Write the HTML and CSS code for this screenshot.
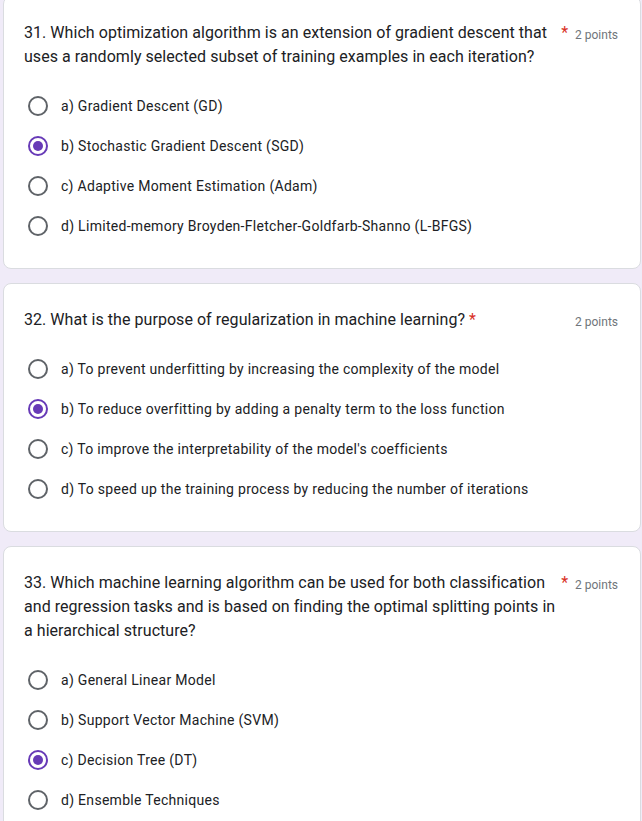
FILE: index.html
```html
<!DOCTYPE html>
<html lang="en">
<head>
<meta charset="utf-8">
<title>Quiz</title>
<link rel="stylesheet" href="styles.css">
</head>
<body>
<main class="form">
  <section class="card card-first">
    <div class="q-head">
      <div class="q-title">31. Which optimization algorithm is an extension of gradient descent that uses a randomly selected subset of training examples in each iteration?</div>
      <span class="req">*</span>
      <span class="pts">2 points</span>
    </div>
    <div class="opts">
      <div class="opt"><span class="radio"></span><span class="lbl">a) Gradient Descent (GD)</span></div>
      <div class="opt"><span class="radio on"></span><span class="lbl">b) Stochastic Gradient Descent (SGD)</span></div>
      <div class="opt"><span class="radio"></span><span class="lbl">c) Adaptive Moment Estimation (Adam)</span></div>
      <div class="opt"><span class="radio"></span><span class="lbl">d) Limited-memory Broyden-Fletcher-Goldfarb-Shanno (L-BFGS)</span></div>
    </div>
  </section>
  <section class="card">
    <div class="q-head">
      <div class="q-title">32. What is the purpose of regularization in machine learning?</div>
      <span class="req">*</span>
      <span class="pts">2 points</span>
    </div>
    <div class="opts">
      <div class="opt"><span class="radio"></span><span class="lbl">a) To prevent underfitting by increasing the complexity of the model</span></div>
      <div class="opt"><span class="radio on"></span><span class="lbl">b) To reduce overfitting by adding a penalty term to the loss function</span></div>
      <div class="opt"><span class="radio"></span><span class="lbl">c) To improve the interpretability of the model's coefficients</span></div>
      <div class="opt"><span class="radio"></span><span class="lbl">d) To speed up the training process by reducing the number of iterations</span></div>
    </div>
  </section>
  <section class="card">
    <div class="q-head">
      <div class="q-title">33. Which machine learning algorithm can be used for both classification and regression tasks and is based on finding the optimal splitting points in a hierarchical structure?</div>
      <span class="req">*</span>
      <span class="pts">2 points</span>
    </div>
    <div class="opts">
      <div class="opt"><span class="radio"></span><span class="lbl">a) General Linear Model</span></div>
      <div class="opt"><span class="radio"></span><span class="lbl">b) Support Vector Machine (SVM)</span></div>
      <div class="opt"><span class="radio on"></span><span class="lbl">c) Decision Tree (DT)</span></div>
      <div class="opt"><span class="radio"></span><span class="lbl">d) Ensemble Techniques</span></div>
    </div>
  </section>
</main>
</body>
</html>
```

FILE: styles.css
```css
html, body {
  margin: 0;
  padding: 0;
  background: #f0ebf8;
  font-family: Roboto, "Liberation Sans", Arial, sans-serif;
  color: #202124;
}

.form {
  display: flex;
  flex-direction: column;
  gap: 14px;
  padding: 0 1px 0 3px;
}

.card {
  background: #ffffff;
  border: 1px solid #dadce0;
  border-radius: 8px;
  padding: 24px 22px 22px 20px;
}

.card-first {
  margin-top: -4px;
}

.q-head {
  display: flex;
  align-items: flex-start;
}

.q-title {
  flex: 0 1 auto;
  font-size: 16px;
  line-height: 24px;
  letter-spacing: 0.05px;
}

.req {
  flex: 0 0 auto;
  color: #d93025;
  font-size: 16px;
  line-height: 24px;
  margin-left: 4px;
}

.pts {
  flex: 0 0 auto;
  margin-left: auto;
  padding-left: 7px;
  font-size: 12px;
  line-height: 24px;
  color: #70757a;
  position: relative;
  top: 2px;
}

.opts {
  margin-top: 17px;
  display: flex;
  flex-direction: column;
}

.opt {
  display: flex;
  align-items: center;
  height: 40px;
  padding-left: 4px;
}

.radio {
  box-sizing: border-box;
  width: 20px;
  height: 20px;
  border: 2px solid #5f6368;
  border-radius: 50%;
  flex: 0 0 auto;
  display: flex;
  align-items: center;
  justify-content: center;
}

.radio.on {
  border-color: #673ab7;
}

.radio.on::after {
  content: "";
  width: 10px;
  height: 10px;
  border-radius: 50%;
  background: #673ab7;
}

.lbl {
  margin-left: 13px;
  font-size: 14px;
  line-height: 20px;
  letter-spacing: 0.29px;
}
```
